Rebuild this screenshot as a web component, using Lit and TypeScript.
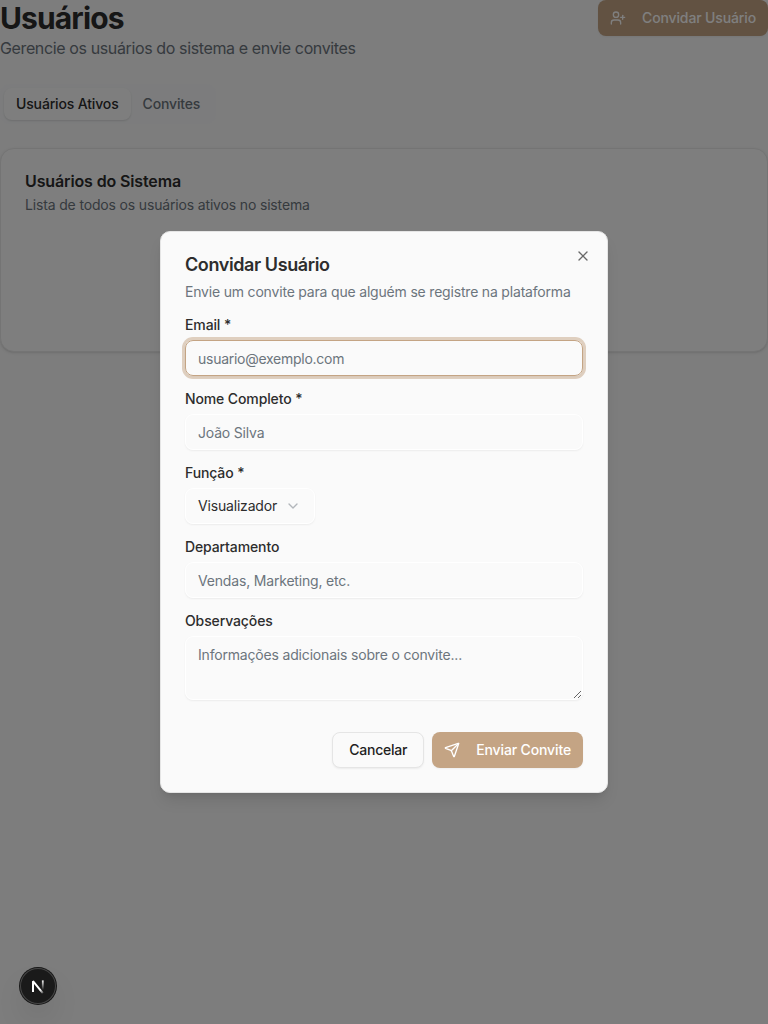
import { LitElement, html, css, svg } from "lit";
import { customElement } from "lit/decorators.js";

const icon = (cls: string, body: unknown) => html`<svg
  class=${cls}
  width="16"
  height="16"
  viewBox="0 0 24 24"
  fill="none"
  stroke="currentColor"
  stroke-width="2"
  stroke-linecap="round"
  stroke-linejoin="round"
>${body}</svg>`;

const userPlus = svg`<path d="M16 21v-2a4 4 0 0 0-4-4H6a4 4 0 0 0-4 4v2"/><circle cx="9" cy="7" r="4"/><path d="M19 8v6"/><path d="M22 11h-6"/>`;
const send = svg`<path d="M14.536 21.686a.5.5 0 0 0 .937-.024l6.5-19a.496.496 0 0 0-.635-.635l-19 6.5a.5.5 0 0 0-.024.937l7.93 3.18a2 2 0 0 1 1.112 1.11z"/><path d="m21.854 2.147-10.94 10.939"/>`;
const cross = svg`<path d="M18 6 6 18"/><path d="m6 6 12 12"/>`;
const chevron = svg`<path d="m6 9 6 6 6-6"/>`;

@customElement("app-root")
export class AppRoot extends LitElement {
  static styles = css`
    :host {
      display: block;
      position: relative;
      height: 100vh;
      overflow: hidden;
      background: #fafafa;
      color: #2d2d2d;
      font-family: Inter, "Liberation Sans", sans-serif;
      font-size: 14px;
      line-height: 20px;
    }
    * { box-sizing: border-box; }
    h1, h2, p { margin: 0; }
    svg { display: block; flex: none; }
    .page { display: flex; flex-direction: column; gap: 24px; }
    .top { display: flex; justify-content: space-between; align-items: flex-start; }
    h1 { font-size: 30px; line-height: 36px; font-weight: 700; letter-spacing: -0.88px; }
    .lead { font-size: 16px; line-height: 24px; letter-spacing: -0.375px; color: #6c757d; }
    .btn {
      display: inline-flex;
      align-items: center;
      justify-content: center;
      height: 36px;
      padding: 0 12px;
      gap: 16px;
      border: 0;
      border-radius: 8px;
      font: 500 14px/20px Inter, "Liberation Sans", sans-serif;
      letter-spacing: -0.135px;
      white-space: nowrap;
      color: #2d2d2d;
      background: #fafafa;
    }
    .primary { background: #c4a484; color: #fff; box-shadow: 0 1px 2px rgba(0, 0, 0, 0.05); }
    .outline {
      padding: 0 16px;
      border: 1px solid #e5e5e5;
      letter-spacing: -0.24px;
      color: #1f1f1f;
      box-shadow: 0 1px 2px rgba(0, 0, 0, 0.06);
    }
    .tabs {
      display: flex;
      align-self: flex-start;
      height: 40px;
      padding: 4px;
      border-radius: 10px;
      background: #f8f9fa;
    }
    .tab {
      display: flex;
      align-items: center;
      padding: 0 12px;
      border-radius: 8px;
      font-weight: 500;
      letter-spacing: -0.15px;
      color: #6c757d;
    }
    .active { background: #fdfdfd; color: #2d2d2d; box-shadow: 0 1px 2px rgba(0, 0, 0, 0.12); }
    .card {
      height: 204px;
      padding: 24px;
      border: 1px solid #e9e9e9;
      border-radius: 14px;
      background: #fdfdfd;
      display: flex;
      flex-direction: column;
      gap: 6px;
      box-shadow: 0 1px 3px rgba(0, 0, 0, 0.1), 0 1px 2px -1px rgba(0, 0, 0, 0.1);
    }
    .card h2 { font-size: 16px; line-height: 16px; font-weight: 600; letter-spacing: -0.13px; }
    .muted { color: #6c757d; letter-spacing: -0.16px; }
    .devtools {
      position: absolute;
      left: 20px;
      bottom: 20px;
      width: 36px;
      height: 36px;
      border-radius: 50%;
      background: #1a1a1a;
      box-shadow: 0 0 0 1px #171717, inset 0 0 0 1px #464646, 0 16px 32px -8px rgba(0, 0, 0, 0.24);
      z-index: 3;
    }
    .overlay {
      position: absolute;
      inset: 0;
      display: flex;
      align-items: center;
      justify-content: center;
      background: rgba(0, 0, 0, 0.5);
    }
    .dialog {
      position: relative;
      width: 448px;
      padding: 24px;
      border: 1px solid #e5e5e5;
      border-radius: 10px;
      background: #fafafa;
      display: flex;
      flex-direction: column;
      gap: 16px;
      box-shadow: 0 10px 15px -3px rgba(0, 0, 0, 0.1), 0 4px 6px -4px rgba(0, 0, 0, 0.1);
    }
    .head, .field { display: flex; flex-direction: column; gap: 8px; align-items: flex-start; }
    .head h2 { font-size: 18px; line-height: 18px; font-weight: 600; letter-spacing: -0.4px; }
    .head .muted { letter-spacing: -0.19px; }
    .close { position: absolute; top: 16px; right: 16px; opacity: 0.7; }
    label { font-weight: 500; line-height: 14px; letter-spacing: -0.12px; }
    .control {
      display: block;
      width: 100%;
      height: 36px;
      margin: 0;
      padding: 4px 12px;
      border: 1px solid #fff;
      border-radius: 8px;
      outline: none;
      background: transparent;
      color: #2d2d2d;
      font: 400 14px/20px Inter, "Liberation Sans", sans-serif;
      letter-spacing: -0.18px;
      box-shadow: 0 1px 2px rgba(0, 0, 0, 0.06);
    }
    .control::placeholder { color: #6c757d; opacity: 1; }
    .focused {
      border-color: #c4a484;
      letter-spacing: -0.27px;
      box-shadow: 0 0 0 3px rgba(196, 164, 132, 0.5), 0 1px 2px rgba(0, 0, 0, 0.05);
    }
    .area { height: 64px; padding: 8px 12px; resize: vertical; }
    .select { display: flex; align-items: center; gap: 8px; width: 130px; }
    .chev { opacity: 0.5; color: #6c757d; }
    .foot { display: flex; justify-content: flex-end; gap: 8px; padding-top: 16px; }
  `;

  private field(label: string, placeholder: string, focused = false) {
    return html`<div class="field">
      <label>${label}</label>
      <input class="control ${focused ? "focused" : ""}" placeholder=${placeholder} />
    </div>`;
  }

  render() {
    return html`
      <div class="page">
        <div class="top">
          <div>
            <h1>Usuários</h1>
            <p class="lead">Gerencie os usuários do sistema e envie convites</p>
          </div>
          <button class="btn primary">${icon("", userPlus)}<span>Convidar Usuário</span></button>
        </div>
        <div class="tabs">
          <div class="tab active">Usuários Ativos</div>
          <div class="tab">Convites</div>
        </div>
        <div class="card">
          <h2>Usuários do Sistema</h2>
          <p class="muted">Lista de todos os usuários ativos no sistema</p>
        </div>
      </div>
      <div class="overlay">
        <div class="dialog" role="dialog">
          <div class="head">
            <h2>Convidar Usuário</h2>
            <p class="muted">Envie um convite para que alguém se registre na plataforma</p>
          </div>
          ${this.field("Email *", "usuario@exemplo.com", true)}
          ${this.field("Nome Completo *", "João Silva")}
          <div class="field">
            <label>Função *</label>
            <div class="control select"><span>Visualizador</span>${icon("chev", chevron)}</div>
          </div>
          ${this.field("Departamento", "Vendas, Marketing, etc.")}
          <div class="field">
            <label>Observações</label>
            <textarea class="control area" placeholder="Informações adicionais sobre o convite..."></textarea>
          </div>
          <div class="foot">
            <button class="btn outline">Cancelar</button>
            <button class="btn primary">${icon("", send)}<span>Enviar Convite</span></button>
          </div>
          ${icon("close", cross)}
        </div>
      </div>
      <div class="devtools">
        <svg width="36" height="36" viewBox="0 0 36 36" fill="none">
          <defs>
            <linearGradient id="diag" x1="18" y1="18" x2="23.5" y2="25" gradientUnits="userSpaceOnUse">
              <stop stop-color="#fff" /><stop offset="0.5" stop-color="#fff" /><stop offset="1" stop-color="#fff" stop-opacity="0.2" />
            </linearGradient>
            <linearGradient id="stem" x1="23" y1="12" x2="23" y2="22" gradientUnits="userSpaceOnUse">
              <stop stop-color="#fff" /><stop offset="1" stop-color="#fff" stop-opacity="0" />
            </linearGradient>
          </defs>
          <path d="M13 24V13.2L22.8 25.2" stroke="url(#diag)" stroke-width="2" stroke-linejoin="bevel" />
          <path d="M22.8 12.4V22" stroke="url(#stem)" stroke-width="1.8" />
        </svg>
      </div>
    `;
  }
}
